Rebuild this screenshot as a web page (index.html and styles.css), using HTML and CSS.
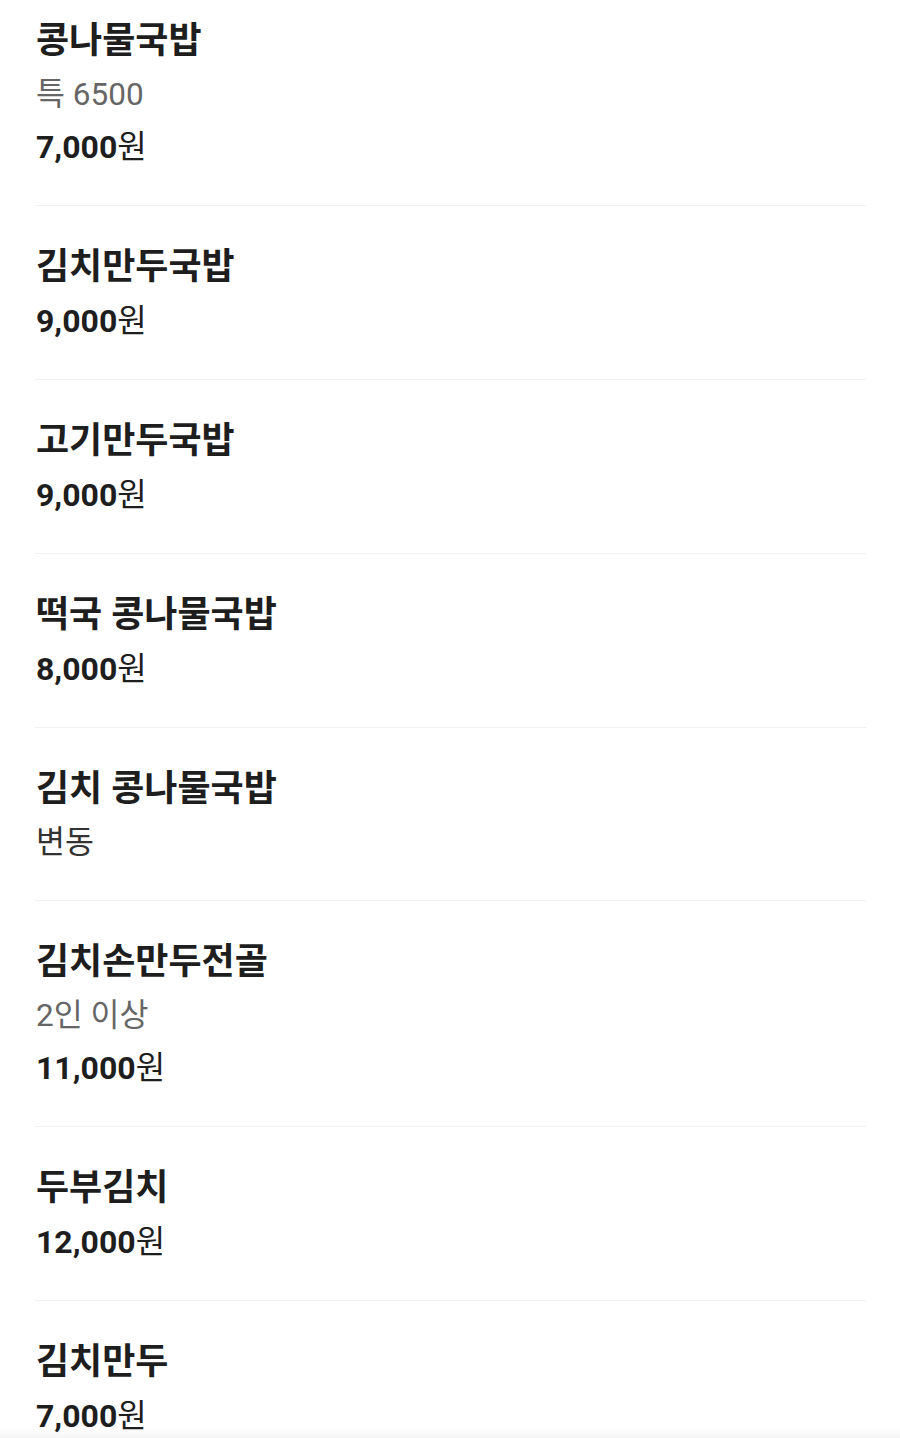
FILE: index.html
```html
<!DOCTYPE html>
<html>
<head>
    <title>메뉴</title>
    <link rel="stylesheet" href="styles.css">
</head>
<body>
    <ul class="menu-list">
        <li class="menu-item first">
            <div class="menu-name">콩나물국밥</div>
            <div class="menu-desc">특 6500</div>
            <div class="menu-price">7,000<span class="won">원</span></div>
        </li>
        <li class="menu-item">
            <div class="menu-name">김치만두국밥</div>
            <div class="menu-price">9,000<span class="won">원</span></div>
        </li>
        <li class="menu-item">
            <div class="menu-name">고기만두국밥</div>
            <div class="menu-price">9,000<span class="won">원</span></div>
        </li>
        <li class="menu-item">
            <div class="menu-name">떡국 콩나물국밥</div>
            <div class="menu-price">8,000<span class="won">원</span></div>
        </li>
        <li class="menu-item">
            <div class="menu-name">김치 콩나물국밥</div>
            <div class="menu-desc dark">변동</div>
        </li>
        <li class="menu-item">
            <div class="menu-name">김치손만두전골</div>
            <div class="menu-desc">2인 이상</div>
            <div class="menu-price">11,000<span class="won">원</span></div>
        </li>
        <li class="menu-item">
            <div class="menu-name">두부김치</div>
            <div class="menu-price">12,000<span class="won">원</span></div>
        </li>
        <li class="menu-item">
            <div class="menu-name">김치만두</div>
            <div class="menu-price">7,000<span class="won">원</span></div>
        </li>
    </ul>
    <div class="bottom-fade"></div>
</body>
</html>
```

FILE: styles.css
```css
body {
    margin: 0;
    background: #fff;
    font-family: Roboto, "Noto Sans CJK KR", sans-serif;
    color: #1c1c1c;
}
.menu-list {
    list-style: none;
    margin: 0;
    padding: 0 33px 0 35px;
}
.menu-item {
    padding: 33px 0 31px 1px;
    border-bottom: 1px solid #f1f1f1;
}
.menu-item.first {
    padding-top: 13px;
}
.menu-item:last-child {
    border-bottom: none;
}
.menu-name {
    font-size: 36px;
    font-weight: 700;
    line-height: 56px;
    color: #1e1e1e;
}
.menu-desc {
    font-size: 31.5px;
    line-height: 52px;
    color: #666;
}
.menu-desc.dark {
    color: #333;
}
.menu-price {
    font-size: 32px;
    font-weight: 700;
    line-height: 53px;
    color: #1e1e1e;
}
.won {
    font-weight: 400;
}
.bottom-fade {
    position: fixed;
    left: 0;
    right: 0;
    bottom: 0;
    height: 10px;
    background: linear-gradient(rgba(0, 0, 0, 0), rgba(0, 0, 0, 0.04));
}
```
